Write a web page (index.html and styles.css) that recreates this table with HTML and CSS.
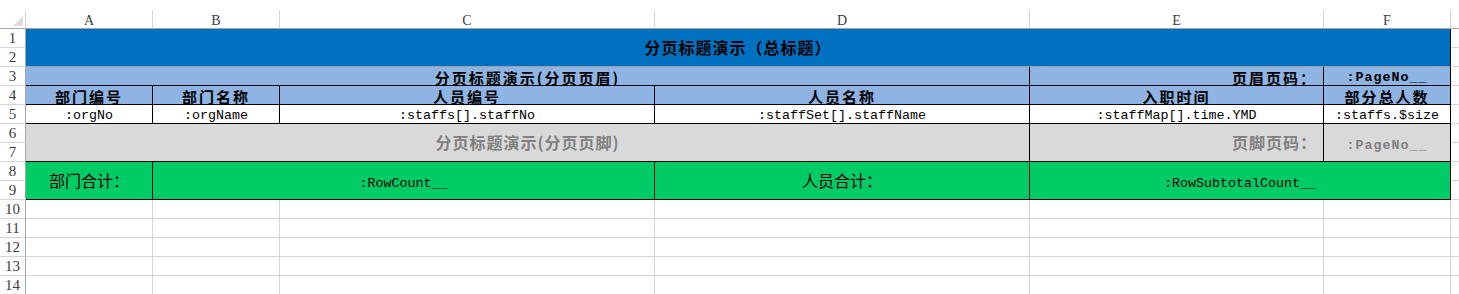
FILE: index.html
```html
<!DOCTYPE html>
<html lang="zh-CN">
<head>
    <meta charset="UTF-8">
    <title>分页标题演示</title>
    <link rel="stylesheet" href="styles.css">
</head>
<body>
    <div class="sheet">
        <!-- 列标题 -->
        <div class="corner"><i></i></div>
        <div class="col-head">A</div>
        <div class="col-head">B</div>
        <div class="col-head">C</div>
        <div class="col-head">D</div>
        <div class="col-head">E</div>
        <div class="col-head">F</div>
        <div class="col-head edge"></div>

        <!-- 1-2 总标题 -->
        <div class="row-head">1</div>
        <div class="cell title span6 tall">分页标题演示（总标题）</div>
        <div class="cell edge"></div>
        <div class="row-head">2</div>
        <div class="cell edge"></div>

        <!-- 3 页眉 -->
        <div class="row-head">3</div>
        <div class="cell tpl band bold span4">分页标题演示(分页页眉)</div>
        <div class="cell tpl band bold right">页眉页码：</div>
        <div class="cell tpl band code bold low">:PageNo__</div>
        <div class="cell edge"></div>

        <!-- 4 表头 -->
        <div class="row-head">4</div>
        <div class="cell tpl band bold">部门编号</div>
        <div class="cell tpl band bold">部门名称</div>
        <div class="cell tpl band bold">人员编号</div>
        <div class="cell tpl band bold">人员名称</div>
        <div class="cell tpl band bold">入职时间</div>
        <div class="cell tpl band bold">部分总人数</div>
        <div class="cell edge"></div>

        <!-- 5 数据行 -->
        <div class="row-head">5</div>
        <div class="cell tpl code low">:orgNo</div>
        <div class="cell tpl code low">:orgName</div>
        <div class="cell tpl code low">:staffs[].staffNo</div>
        <div class="cell tpl code low">:staffSet[].staffName</div>
        <div class="cell tpl code low">:staffMap[].time.YMD</div>
        <div class="cell tpl code low">:staffs.$size</div>
        <div class="cell edge"></div>

        <!-- 6-7 页脚 -->
        <div class="row-head">6</div>
        <div class="cell tpl foot bold span4 tall">分页标题演示(分页页脚)</div>
        <div class="cell tpl foot bold right tall">页脚页码：</div>
        <div class="cell tpl foot code bold mid tall">:PageNo__</div>
        <div class="cell edge"></div>
        <div class="row-head">7</div>
        <div class="cell edge"></div>

        <!-- 8-9 合计 -->
        <div class="row-head">8</div>
        <div class="cell tpl sum tall">部门合计：</div>
        <div class="cell tpl sum code mid span2 tall">:RowCount__</div>
        <div class="cell tpl sum tall">人员合计：</div>
        <div class="cell tpl sum code mid span2 tall">:RowSubtotalCount__</div>
        <div class="cell edge"></div>
        <div class="row-head">9</div>
        <div class="cell edge"></div>

        <!-- 空白行 -->
        <div class="row-head">10</div>
        <div class="cell"></div><div class="cell"></div><div class="cell"></div>
        <div class="cell"></div><div class="cell"></div><div class="cell"></div>
        <div class="cell edge"></div>
        <div class="row-head">11</div>
        <div class="cell"></div><div class="cell"></div><div class="cell"></div>
        <div class="cell"></div><div class="cell"></div><div class="cell"></div>
        <div class="cell edge"></div>
        <div class="row-head">12</div>
        <div class="cell"></div><div class="cell"></div><div class="cell"></div>
        <div class="cell"></div><div class="cell"></div><div class="cell"></div>
        <div class="cell edge"></div>
        <div class="row-head">13</div>
        <div class="cell"></div><div class="cell"></div><div class="cell"></div>
        <div class="cell"></div><div class="cell"></div><div class="cell"></div>
        <div class="cell edge"></div>
        <div class="row-head">14</div>
        <div class="cell"></div><div class="cell"></div><div class="cell"></div>
        <div class="cell"></div><div class="cell"></div><div class="cell"></div>
        <div class="cell edge"></div>
    </div>
</body>
</html>
```

FILE: styles.css
```css
*{
    margin: 0;
    padding: 0;
    box-sizing: border-box;
}
body{
    background-color: #fff;
    overflow: hidden;
    font-family: "Noto Sans CJK SC", "Liberation Mono", sans-serif;
    color: #000;
}
.sheet{
    margin-top: 10px;
    display: grid;
    grid-template-columns: 26px 127px 127px 375px 375px 294px 127px 8px;
    grid-auto-rows: 19px;
}
.sheet > div{
    display: flex;
    justify-content: center;
    align-items: center;
    white-space: nowrap;
    border-right: 1px solid #d4d4d4;
    border-bottom: 1px solid #d4d4d4;
    font-size: 16px;
    line-height: 15px;
}

/* 行列标题 */
.corner{
    justify-content: flex-end !important;
    align-items: flex-end !important;
    padding: 0 2px 2px 0;
    border-bottom-color: #a6a6a6 !important;
}
.corner i{
    width: 0;
    height: 0;
    border-left: 10px solid transparent;
    border-bottom: 10px solid #dcdcdc;
}
.col-head{
    align-items: flex-start !important;
    padding-top: 4px;
    font-family: "Liberation Serif", serif;
    font-size: 14px !important;
    line-height: 13px !important;
    color: #3c3c3c;
    border-bottom-color: #a6a6a6 !important;
}
.row-head{
    align-items: flex-start !important;
    padding-top: 2px;
    font-family: "Liberation Serif", serif;
    font-size: 15px !important;
    line-height: 15px !important;
    color: #3c3c3c;
    border-right-color: #a6a6a6 !important;
}
.edge{
    border-right: none !important;
}

/* 合并单元格 */
.span2{ grid-column: span 2; }
.span4{ grid-column: span 4; }
.span6{ grid-column: span 6; }
.tall{ grid-row: span 2; }

/* 模板区域 */
.tpl{
    border-right-color: #000 !important;
    border-bottom-color: #000 !important;
}
.title{
    background-color: #0070c0;
    font-weight: bold;
    letter-spacing: 1px;
    border-right-color: #000 !important;
    border-bottom-color: #a0a0a0 !important;
}
.band{
    background-color: #8db4e2;
    padding-top: 3px;
    font-size: 15px !important;
    line-height: 14px !important;
}
.foot{
    background-color: #d9d9d9;
    color: #808080;
}
.sum{
    background-color: #00cc66;
}
.bold{
    font-weight: bold;
    letter-spacing: 1px;
}
.band.bold{
    letter-spacing: 2px;
}
.right{
    justify-content: flex-end !important;
    padding-right: 6px;
}
.code{
    font-family: "Liberation Mono", monospace;
    font-size: 13.33px !important;
    line-height: 13px !important;
}
.code.bold{
    letter-spacing: 1px !important;
}
.low{
    align-items: flex-start !important;
    padding-top: 4px;
}
.mid{
    padding-top: 6px;
}
```
